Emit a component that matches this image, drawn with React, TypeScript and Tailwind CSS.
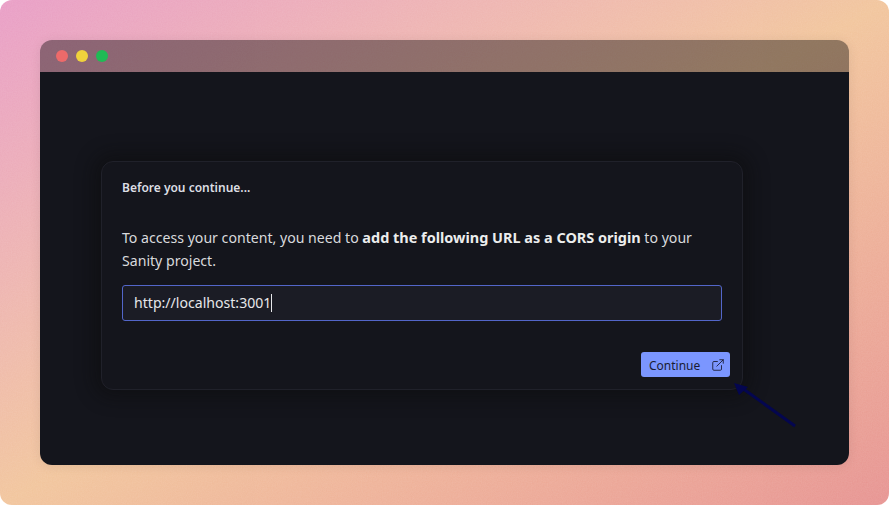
import { ExternalLink } from "lucide-react"

export default function App() {
  return (
    <div className="relative w-[889px] h-[505px] overflow-hidden rounded-[12px] bg-gradient-to-br from-[#e99dc6] via-[#f2c59c] to-[#e79391] p-10 font-['Noto_Sans',sans-serif]">
      {/* grain over the backdrop */}
      <svg className="absolute inset-0 opacity-[0.14]" width="889" height="505">
        <filter id="grain">
          <feTurbulence type="fractalNoise" baseFrequency="0.8" numOctaves="2" />
          <feColorMatrix type="matrix" values="0 0 0 0 1  0 0 0 0 1  0 0 0 0 1  0 0 0 0.8 0" />
        </filter>
        <rect width="889" height="505" filter="url(#grain)" />
      </svg>

      <div className="relative h-[425px] w-[809px] overflow-hidden rounded-[12px] shadow-[0_1px_12px_rgba(0,0,0,0.08)]">
        <div className="flex h-8 items-center gap-2 bg-black/40 pl-4">
          <span className="h-3 w-3 rounded-full bg-[#ed6a6a]" />
          <span className="h-3 w-3 rounded-full bg-[#f0d23c]" />
          <span className="h-3 w-3 rounded-full bg-[#1fbb55]" />
        </div>

        <div className="h-[393px] bg-[#14151c] pl-[61px] pt-[89px]">
          <div className="h-[229px] w-[642px] rounded-[12px] border border-[#20212a] bg-[#14151c] px-5 pt-[17px] shadow-[0_0_18px_8px_rgba(10,10,12,0.45)]">
            <h2 className="text-[12px] leading-[18px] font-semibold text-[#dcdee3]">Before you continue...</h2>

            <p className="mt-[29px] text-[14.12px] leading-[23px] text-[#d9dadd]">
              To access your content, you need to{" "}
              <strong className="text-[14.46px] font-bold text-[#eceded]">add the following URL as a CORS origin</strong> to your
              <br />
              Sanity project.
            </p>

            <div className="mt-[13px] flex h-[36px] w-[600px] items-center rounded-[3px] border border-[#5366c9] bg-[#1b1c25] pl-[11px] text-[14.1px] text-[#e6e7ea]">
              http://localhost:3001
              <span className="h-[18px] w-px bg-[#e6e7ea]" />
            </div>

            <div className="mt-[31px] flex justify-end">
              <button className="-mr-2 flex h-[25px] w-[89px] items-center justify-between rounded-[3px] bg-[#7b96ff] pl-2 pr-[5px] text-[12px] text-[#1a1c33]">
                <span className="pt-[2px]">Continue</span>
                <ExternalLink className="h-[14px] w-[14px]" strokeWidth={1.5} />
              </button>
            </div>
          </div>
        </div>

        <svg className="absolute left-[690px] top-[338px]" width="70" height="54" viewBox="0 0 70 54">
          <path d="M65 48 L12 10" stroke="#04064f" strokeWidth="3" fill="none" />
          <path d="M4 5 L18 9 L9 17 Z" fill="#04064f" />
        </svg>
      </div>
    </div>
  )
}
